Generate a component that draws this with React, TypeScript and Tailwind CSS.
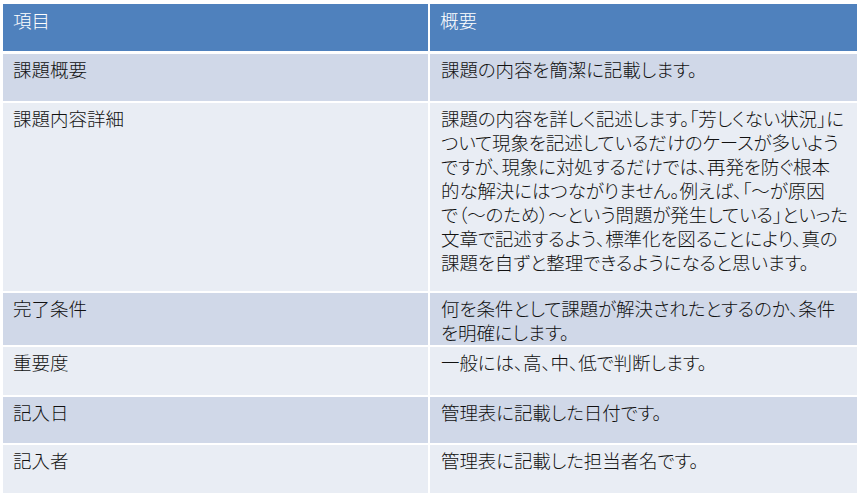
import React from 'react';

const App = () => {
  const rows = [
    {
      item: '課題概要',
      lines: ['課題の内容を簡潔に記載します。'],
      height: 'h-[47px]',
      tone: 'bg-[#d0d8e8]'
    },
    {
      item: '課題内容詳細',
      lines: [
        '課題の内容を詳しく記述します。「芳しくない状況」に',
        'ついて現象を記述しているだけのケースが多いよう',
        'ですが、現象に対処するだけでは、再発を防ぐ根本',
        '的な解決にはつながりません。例えば、「～が原因',
        'で（～のため）～という問題が発生している」といった',
        '文章で記述するよう、標準化を図ることにより、真の',
        '課題を自ずと整理できるようになると思います。'
      ],
      height: 'h-[188px]',
      tone: 'bg-[#e9edf4]'
    },
    {
      item: '完了条件',
      lines: ['何を条件として課題が解決されたとするのか、条件', 'を明確にします。'],
      height: 'h-[52px]',
      tone: 'bg-[#d0d8e8]'
    },
    {
      item: '重要度',
      lines: ['一般には、高、中、低で判断します。'],
      height: 'h-[48px]',
      tone: 'bg-[#e9edf4]'
    },
    {
      item: '記入日',
      lines: ['管理表に記載した日付です。'],
      height: 'h-[46px]',
      tone: 'bg-[#d0d8e8]'
    },
    {
      item: '記入者',
      lines: ['管理表に記載した担当者名です。'],
      height: 'h-[48px]',
      tone: 'bg-[#e9edf4]'
    }
  ];

  return (
    <div
      className="w-[860px] h-[500px] bg-white pt-[4px] pl-[3px] text-[18.5px] leading-[24px] font-light text-[#111]"
      style={{ fontFamily: '"Noto Sans CJK JP", "Noto Sans", sans-serif', fontFeatureSettings: '"palt"' }}
    >
      <div className="w-[854px] flex flex-col gap-[2px]">
        {/* Header */}
        <div className="grid grid-cols-[425px_427px] gap-[2px] h-[47px] mb-[1px]">
          <div className="bg-[#4f81bd] text-white pl-[10px] pt-[4px]">項目</div>
          <div className="bg-[#4f81bd] text-white pl-[10px] pt-[4px]">概要</div>
        </div>

        {rows.map((row, index) => (
          <div key={index} className={`grid grid-cols-[425px_427px] gap-[2px] ${row.height}`}>
            <div className={`${row.tone} pl-[10px] pt-[3px]`}>{row.item}</div>
            <div className={`${row.tone} pl-[11px] pt-[3px] whitespace-nowrap tracking-[-0.1px]`}>
              {row.lines.map((line, i) => (
                <div key={i}>{line}</div>
              ))}
            </div>
          </div>
        ))}
      </div>
    </div>
  );
};

export default App;
